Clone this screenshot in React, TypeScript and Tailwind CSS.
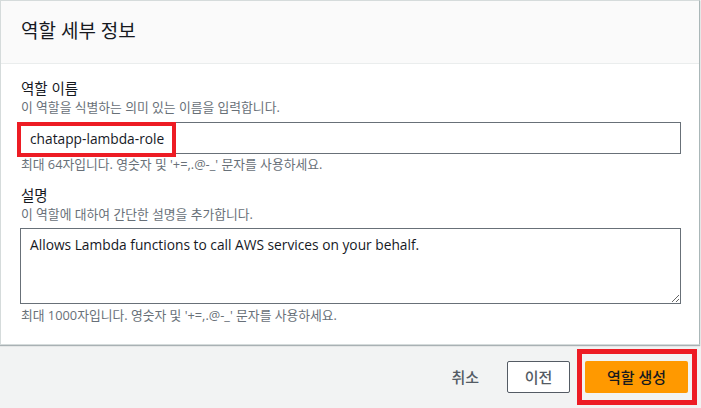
import React from 'react';

const font = { fontFamily: '"Open Sans", "Noto Sans CJK KR", sans-serif' };

function Field({ label, hint, children, note }: { label: string; hint: string; children: React.ReactNode; note: string }) {
  return (
    <div className="flex flex-col">
      <div className="text-[14.5px] leading-[20px] text-[#16191f] pl-[1px]">{label}</div>
      <div className="text-[12.8px] leading-[16px] text-[#687078] pl-[1px]">{hint}</div>
      {children}
      <div className="text-[12.8px] leading-[16px] text-[#687078] pl-[1px]">{note}</div>
    </div>
  );
}

export default function App() {
  return (
    <div className="w-[701px] h-[408px] bg-[#f2f3f3] overflow-hidden" style={font}>
      <div className="w-[700px] bg-white border border-[#d5dbdb] border-r-[#aab7b8] shadow-[0_1px_1px_rgba(0,28,36,0.3)]">
        <div className="h-[63px] bg-[#fafafa] border-b border-[#eaeded] flex items-center px-[20px]">
          <h2 className="text-[19px] leading-[24px] text-[#16191f] -mt-[2px]">역할 세부 정보</h2>
        </div>

        <div className="pl-[19px] pr-[18px] pt-[15px] pb-[21px] flex flex-col">
          <Field
            label="역할 이름"
            hint="이 역할을 식별하는 의미 있는 이름을 입력합니다."
            note="최대 64자입니다. 영숫자 및 '+=,.@-_' 문자를 사용하세요."
          >
            <div className="relative mt-[7px] mb-[2px]">
              <input
                readOnly
                value="chatapp-lambda-role"
                className="w-full h-[32px] border border-[#687078] px-[9px] text-[13.75px] text-[#16191f] outline-none"
                style={font}
              />
              <div className="absolute left-[-3px] top-0 w-[159px] h-[35px] border-[4px] border-[#ed1c24] pointer-events-none" />
            </div>
          </Field>

          <div className="mt-[14px]">
            <Field
              label="설명"
              hint="이 역할에 대하여 간단한 설명을 추가합니다."
              note="최대 1000자입니다. 영숫자 및 '+=,.@-_' 문자를 사용하세요."
            >
              <textarea
                readOnly
                defaultValue="Allows Lambda functions to call AWS services on your behalf."
                className="mt-[6px] mb-[3px] w-full h-[76px] border border-[#687078] px-[9px] py-[6px] text-[13.75px] leading-[20px] text-[#16191f] outline-none block"
                style={font}
              />
            </Field>
          </div>
        </div>
      </div>

      <div className="flex justify-end items-center pr-[13px] pt-[16px]">
        <button className="h-[32px] px-[20px] text-[15px] font-medium text-[#545b64] mr-[8px]">취소</button>
        <button className="h-[32px] w-[63px] border border-[#545b64] bg-white text-[15px] font-medium text-[#545b64] rounded-[2px] mr-[15px]">
          이전
        </button>
        <div className="relative">
          <button className="h-[32px] w-[103px] bg-[#ff9900] text-[15px] font-medium text-[#16191f] rounded-[2px]">역할 생성</button>
          <div className="absolute left-[-8px] right-[-9px] top-[-12px] bottom-[-12px] border-[5px] border-[#ed1c24] pointer-events-none" />
        </div>
      </div>
    </div>
  );
}
